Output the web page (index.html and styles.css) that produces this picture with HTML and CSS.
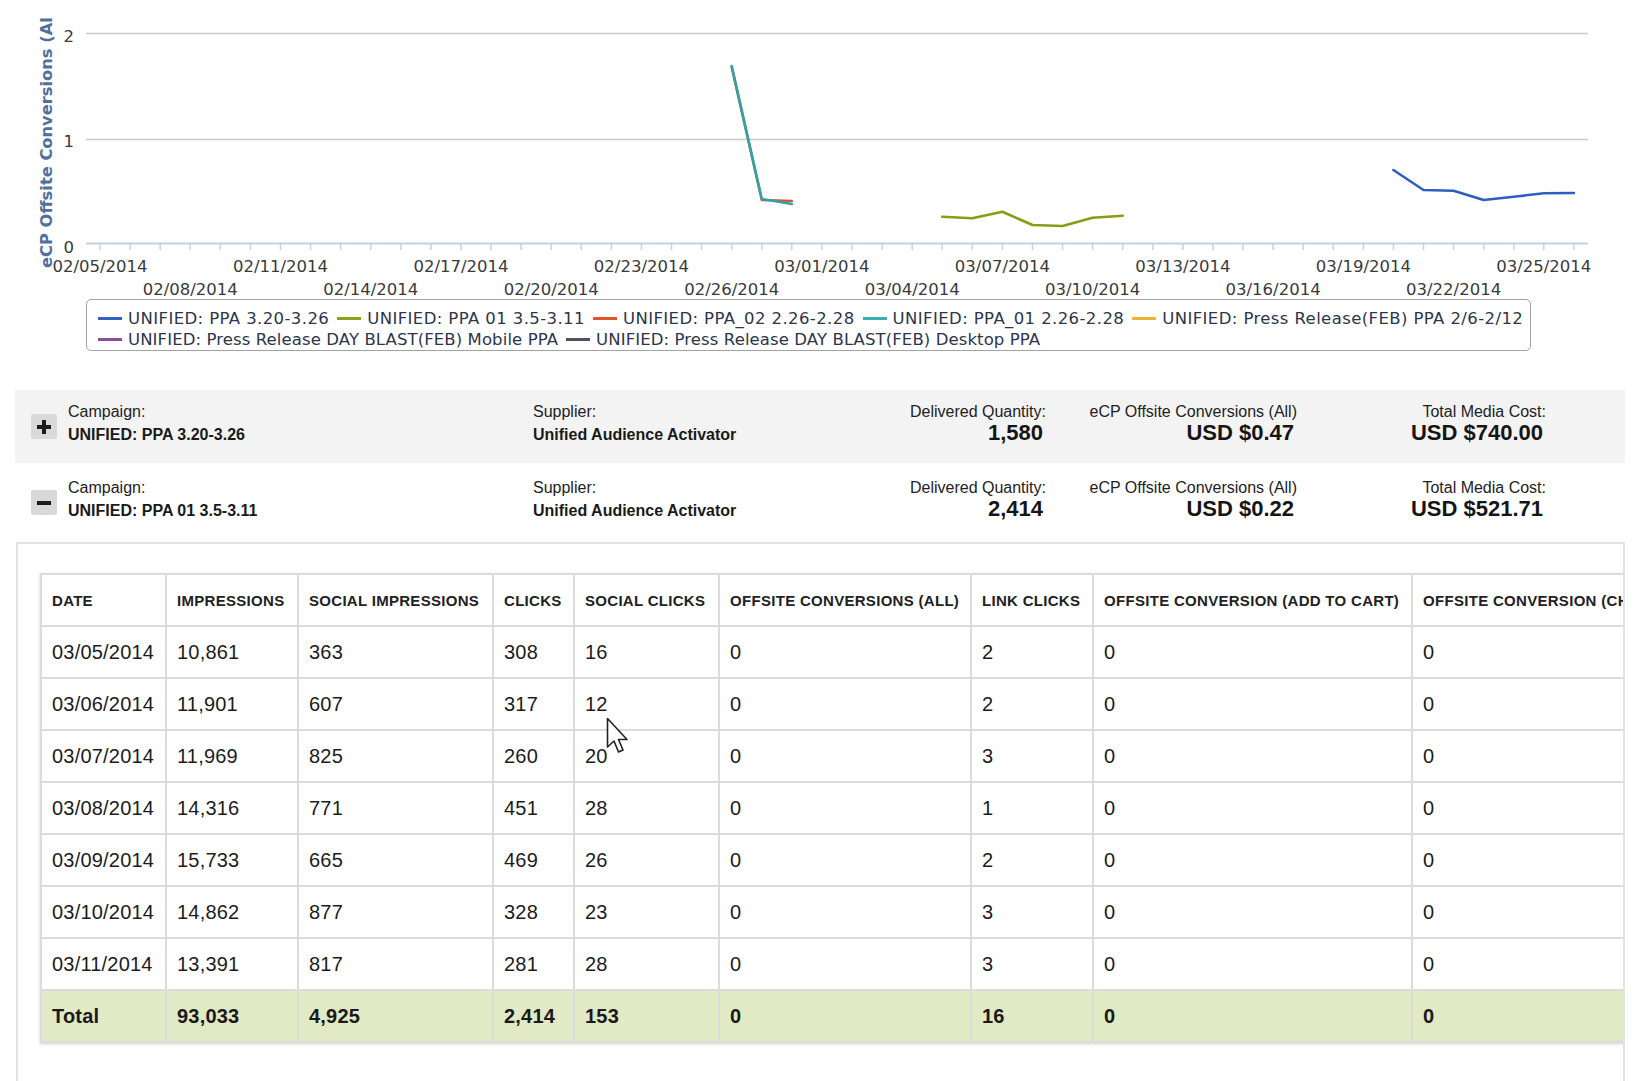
FILE: index.html
```html
<!DOCTYPE html>
<html lang="en">
<head>
<meta charset="utf-8">
<title>Campaign report</title>
<link rel="stylesheet" href="styles.css">
</head>
<body>
<section class="chart">
  <svg class="chart-svg" width="1649" height="298" viewBox="0 0 1649 298">
    <defs>
      <clipPath id="titleClip"><rect x="20" y="18" width="60" height="270"/></clipPath>
    </defs>
    <g class="grid">
      <line x1="86" y1="33.5" x2="1588" y2="33.5"/>
      <line x1="86" y1="139.5" x2="1588" y2="139.5"/>
    </g>
    <line class="axis" x1="86" y1="243.5" x2="1588" y2="243.5"/>
    <path class="ticks" d="M100 244v6M130.1 244v6M160.2 244v6M190.2 244v6M220.3 244v6M250.4 244v6M280.5 244v6M310.6 244v6M340.6 244v6M370.7 244v6M400.8 244v6M430.9 244v6M461 244v6M491 244v6M521.1 244v6M551.2 244v6M581.3 244v6M611.4 244v6M641.4 244v6M671.5 244v6M701.6 244v6M731.7 244v6M761.8 244v6M791.8 244v6M821.9 244v6M852 244v6M882.1 244v6M912.2 244v6M942.2 244v6M972.3 244v6M1002.4 244v6M1032.5 244v6M1062.6 244v6M1092.6 244v6M1122.7 244v6M1152.8 244v6M1182.9 244v6M1213 244v6M1243 244v6M1273.1 244v6M1303.2 244v6M1333.3 244v6M1363.4 244v6M1393.4 244v6M1423.5 244v6M1453.6 244v6M1483.7 244v6M1513.8 244v6M1543.8 244v6M1573.9 244v6"/>
    <g class="ylabels">
      <text x="74" y="42">2</text>
      <text x="74" y="147">1</text>
      <text x="74" y="253">0</text>
    </g>
    <g clip-path="url(#titleClip)">
      <text class="y-title" transform="translate(52 268) rotate(-90)">eCP Offsite Conversions (All)</text>
    </g>
    <g class="xlabels">
      <text x="100" y="272">02/05/2014</text>
      <text x="280.5" y="272">02/11/2014</text>
      <text x="461" y="272">02/17/2014</text>
      <text x="641.4" y="272">02/23/2014</text>
      <text x="821.9" y="272">03/01/2014</text>
      <text x="1002.4" y="272">03/07/2014</text>
      <text x="1182.9" y="272">03/13/2014</text>
      <text x="1363.4" y="272">03/19/2014</text>
      <text x="1543.8" y="272">03/25/2014</text>
      <text x="190.2" y="295">02/08/2014</text>
      <text x="370.7" y="295">02/14/2014</text>
      <text x="551.2" y="295">02/20/2014</text>
      <text x="731.7" y="295">02/26/2014</text>
      <text x="912.2" y="295">03/04/2014</text>
      <text x="1092.6" y="295">03/10/2014</text>
      <text x="1273.1" y="295">03/16/2014</text>
      <text x="1453.6" y="295">03/22/2014</text>
    </g>
    <polyline class="series s-red" points="731.7,67 761.8,200 791.8,201"/>
    <polyline class="series s-teal" points="731.7,66 761.8,199 791.8,204"/>
    <polyline class="series s-olive" points="942.2,216.7 972.3,218.3 1002.4,211.7 1032.5,225 1062.6,226 1092.6,217.7 1122.7,215.7"/>
    <polyline class="series s-blue" points="1393.4,170 1423.5,190 1453.6,190.7 1483.7,200 1513.8,196.7 1543.8,193.3 1573.9,193"/>
  </svg>
  <div class="legend">
    <div class="legend-row legend-row-wide">
      <span class="legend-item"><span class="swatch sw-blue"></span>UNIFIED: PPA 3.20-3.26</span>
      <span class="legend-item"><span class="swatch sw-olive"></span>UNIFIED: PPA 01 3.5-3.11</span>
      <span class="legend-item"><span class="swatch sw-red"></span>UNIFIED: PPA_02 2.26-2.28</span>
      <span class="legend-item"><span class="swatch sw-teal"></span>UNIFIED: PPA_01 2.26-2.28</span>
      <span class="legend-item"><span class="swatch sw-gold"></span>UNIFIED: Press Release(FEB) PPA 2/6-2/12</span>
    </div>
    <div class="legend-row">
      <span class="legend-item"><span class="swatch sw-purple"></span>UNIFIED: Press Release DAY BLAST(FEB) Mobile PPA</span>
      <span class="legend-item"><span class="swatch sw-slate"></span>UNIFIED: Press Release DAY BLAST(FEB) Desktop PPA</span>
    </div>
  </div>
</section>

<section class="campaigns">
  <div class="campaign campaign-shaded">
    <span class="toggle toggle-plus" aria-label="expand"></span>
    <div class="field field-campaign"><div class="label">Campaign:</div><div class="value">UNIFIED: PPA 3.20-3.26</div></div>
    <div class="field field-supplier"><div class="label">Supplier:</div><div class="value">Unified Audience Activator</div></div>
    <div class="field field-delivered"><div class="label">Delivered Quantity:</div><div class="big">1,580</div></div>
    <div class="field field-ecp"><div class="label">eCP Offsite Conversions (All)</div><div class="big">USD $0.47</div></div>
    <div class="field field-cost"><div class="label">Total Media Cost:</div><div class="big">USD $740.00</div></div>
  </div>
  <div class="campaign campaign-open">
    <span class="toggle toggle-minus" aria-label="collapse"></span>
    <div class="field field-campaign"><div class="label">Campaign:</div><div class="value">UNIFIED: PPA 01 3.5-3.11</div></div>
    <div class="field field-supplier"><div class="label">Supplier:</div><div class="value">Unified Audience Activator</div></div>
    <div class="field field-delivered"><div class="label">Delivered Quantity:</div><div class="big">2,414</div></div>
    <div class="field field-ecp"><div class="label">eCP Offsite Conversions (All)</div><div class="big">USD $0.22</div></div>
    <div class="field field-cost"><div class="label">Total Media Cost:</div><div class="big">USD $521.71</div></div>
  </div>

  <div class="detail">
    <table class="stats">
      <colgroup>
        <col class="c-date"><col class="c-imp"><col class="c-simp"><col class="c-clk"><col class="c-sclk"><col class="c-conv"><col class="c-link"><col class="c-cart"><col class="c-chk">
      </colgroup>
      <thead>
        <tr><th>DATE</th><th>IMPRESSIONS</th><th>SOCIAL IMPRESSIONS</th><th>CLICKS</th><th>SOCIAL CLICKS</th><th>OFFSITE CONVERSIONS (ALL)</th><th>LINK CLICKS</th><th>OFFSITE CONVERSION (ADD TO CART)</th><th>OFFSITE CONVERSION (CHECKOUT)</th></tr>
      </thead>
      <tbody>
        <tr><td>03/05/2014</td><td>10,861</td><td>363</td><td>308</td><td>16</td><td>0</td><td>2</td><td>0</td><td>0</td></tr>
        <tr><td>03/06/2014</td><td>11,901</td><td>607</td><td>317</td><td>12</td><td>0</td><td>2</td><td>0</td><td>0</td></tr>
        <tr><td>03/07/2014</td><td>11,969</td><td>825</td><td>260</td><td>20</td><td>0</td><td>3</td><td>0</td><td>0</td></tr>
        <tr><td>03/08/2014</td><td>14,316</td><td>771</td><td>451</td><td>28</td><td>0</td><td>1</td><td>0</td><td>0</td></tr>
        <tr><td>03/09/2014</td><td>15,733</td><td>665</td><td>469</td><td>26</td><td>0</td><td>2</td><td>0</td><td>0</td></tr>
        <tr><td>03/10/2014</td><td>14,862</td><td>877</td><td>328</td><td>23</td><td>0</td><td>3</td><td>0</td><td>0</td></tr>
        <tr><td>03/11/2014</td><td>13,391</td><td>817</td><td>281</td><td>28</td><td>0</td><td>3</td><td>0</td><td>0</td></tr>
      </tbody>
      <tfoot>
        <tr class="total"><td>Total</td><td>93,033</td><td>4,925</td><td>2,414</td><td>153</td><td>0</td><td>16</td><td>0</td><td>0</td></tr>
      </tfoot>
    </table>
  </div>
</section>

<svg class="cursor" width="26" height="40" viewBox="0 0 26 40" aria-hidden="true">
  <path d="M1.5 1.5 L1.5 30 L8 24 L12.5 35 L17 33 L12.5 22.5 L21 22.5 Z" fill="#fff" stroke="#222" stroke-width="1.6" stroke-linejoin="round"/>
</svg>
</body>
</html>
```

FILE: styles.css
```css
* { box-sizing: border-box; }

html, body {
  margin: 0;
  padding: 0;
  background: #ffffff;
}

body {
  position: relative;
  width: 1649px;
  height: 1081px;
  overflow: hidden;
  font-family: "Liberation Sans", Arial, sans-serif;
  color: #1e1e1e;
}

/* ---------- chart ---------- */
.chart-svg { display: block; }

.grid line {
  stroke: #cbcbcb;
  stroke-width: 1.6;
}

.axis {
  stroke: #c3d1e0;
  stroke-width: 2;
}

.ticks {
  stroke: #c3d1e0;
  stroke-width: 1.5;
  fill: none;
}

.ylabels text {
  font-family: "DejaVu Sans", sans-serif;
  font-size: 16.5px;
  fill: #3a3a3a;
  text-anchor: end;
}

.xlabels text {
  font-family: "DejaVu Sans", sans-serif;
  font-size: 16.5px;
  fill: #3a3a3a;
  text-anchor: middle;
}

.y-title {
  font-family: "DejaVu Sans", sans-serif;
  font-size: 16.3px;
  font-weight: bold;
  fill: #52709b;
}

.series {
  fill: none;
  stroke-width: 2.6;
  stroke-linejoin: round;
  stroke-linecap: round;
}
.s-red { stroke: #d9562c; }
.s-teal { stroke: #2ea4aa; }
.s-olive { stroke: #8b9b14; }
.s-blue { stroke: #2e5ec0; }

.legend {
  margin: 1px 0 0 86px;
  width: 1445px;
  height: 52px;
  border: 1.5px solid #a2a2a2;
  border-radius: 5px;
  padding: 8px 0 0 11px;
  font-family: "DejaVu Sans", sans-serif;
  font-size: 16.5px;
  line-height: 21px;
  color: #2e3549;
}

.legend-row {
  display: flex;
  white-space: nowrap;
  letter-spacing: 0.1px;
}

.legend-row-wide { letter-spacing: 0.4px; }

.legend-item {
  display: flex;
  align-items: center;
  margin-right: 8px;
}

.swatch {
  display: inline-block;
  width: 24px;
  height: 3px;
  margin-right: 6px;
}
.sw-blue { background: #3362c3; }
.sw-olive { background: #8fa11c; }
.sw-red { background: #e0532b; }
.sw-teal { background: #3aafb0; }
.sw-gold { background: #e9b535; }
.sw-purple { background: #8f4b9b; }
.sw-slate { background: #4b5262; }

/* ---------- campaign rows ---------- */
.campaigns { margin-top: 39px; }

.campaign {
  display: flex;
  align-items: flex-start;
  margin-left: 15px;
  width: 1610px;
  height: 73px;
}

.campaign-shaded { background: #f3f3f3; }
.campaign-open { margin-top: 3px; }

.toggle {
  position: relative;
  flex: none;
  align-self: center;
  width: 26px;
  height: 25px;
  margin-left: 16px;
  margin-right: 11px;
  background: #d9d9d9;
  border-radius: 2px;
}

.toggle::before {
  content: "";
  position: absolute;
  left: 6px;
  top: 11px;
  width: 14px;
  height: 4px;
  background: #1c1c1c;
}

.toggle-plus::after {
  content: "";
  position: absolute;
  left: 11px;
  top: 6px;
  width: 4px;
  height: 14px;
  background: #1c1c1c;
}

.field {
  flex: none;
  padding-top: 12px;
}

.field-campaign { width: 465px; }
.field-supplier { width: 300px; }
.field-delivered { width: 213px; text-align: right; }
.field-ecp { width: 212px; margin-left: 39px; text-align: right; }
.field-cost { width: 249px; text-align: right; }

.label {
  font-size: 16px;
  line-height: 20px;
  color: #222;
  white-space: nowrap;
}

.value {
  font-size: 16px;
  font-weight: bold;
  line-height: 26px;
  color: #1a1a1a;
  white-space: nowrap;
}

.big {
  font-size: 22px;
  font-weight: bold;
  line-height: 22px;
  color: #151515;
  white-space: nowrap;
  padding-right: 3px;
}

/* ---------- detail table ---------- */
.detail {
  margin: 3px 0 0 16px;
  width: 1609px;
  border: 2px solid #e2e2e2;
  border-bottom: none;
  padding: 29px 0 80px 22px;
  overflow: hidden;
  background: #fff;
}

.stats {
  border-collapse: collapse;
  table-layout: fixed;
  width: 1671px;
  box-shadow: 0 1px 3px rgba(0, 0, 0, 0.18);
}

.c-date { width: 125px; }
.c-imp { width: 132px; }
.c-simp { width: 195px; }
.c-clk { width: 81px; }
.c-sclk { width: 145px; }
.c-conv { width: 252px; }
.c-link { width: 122px; }
.c-cart { width: 319px; }
.c-chk { width: 300px; }

.stats th,
.stats td {
  border: 2px solid #dcdcdc;
  padding: 0 0 0 10px;
  text-align: left;
  vertical-align: middle;
  white-space: nowrap;
  overflow: hidden;
}

.stats th {
  height: 52px;
  font-size: 15px;
  letter-spacing: 0.3px;
  font-weight: bold;
  color: #222;
}

.stats td {
  height: 52px;
  font-size: 20px;
  letter-spacing: 0.2px;
  color: #1c1c1c;
}

.stats .total td {
  background: #e1e9c5;
  font-weight: bold;
  color: #1a1a1a;
}

/* ---------- mouse pointer overlay ---------- */
.cursor {
  position: absolute;
  left: 606px;
  top: 717px;
}
```
